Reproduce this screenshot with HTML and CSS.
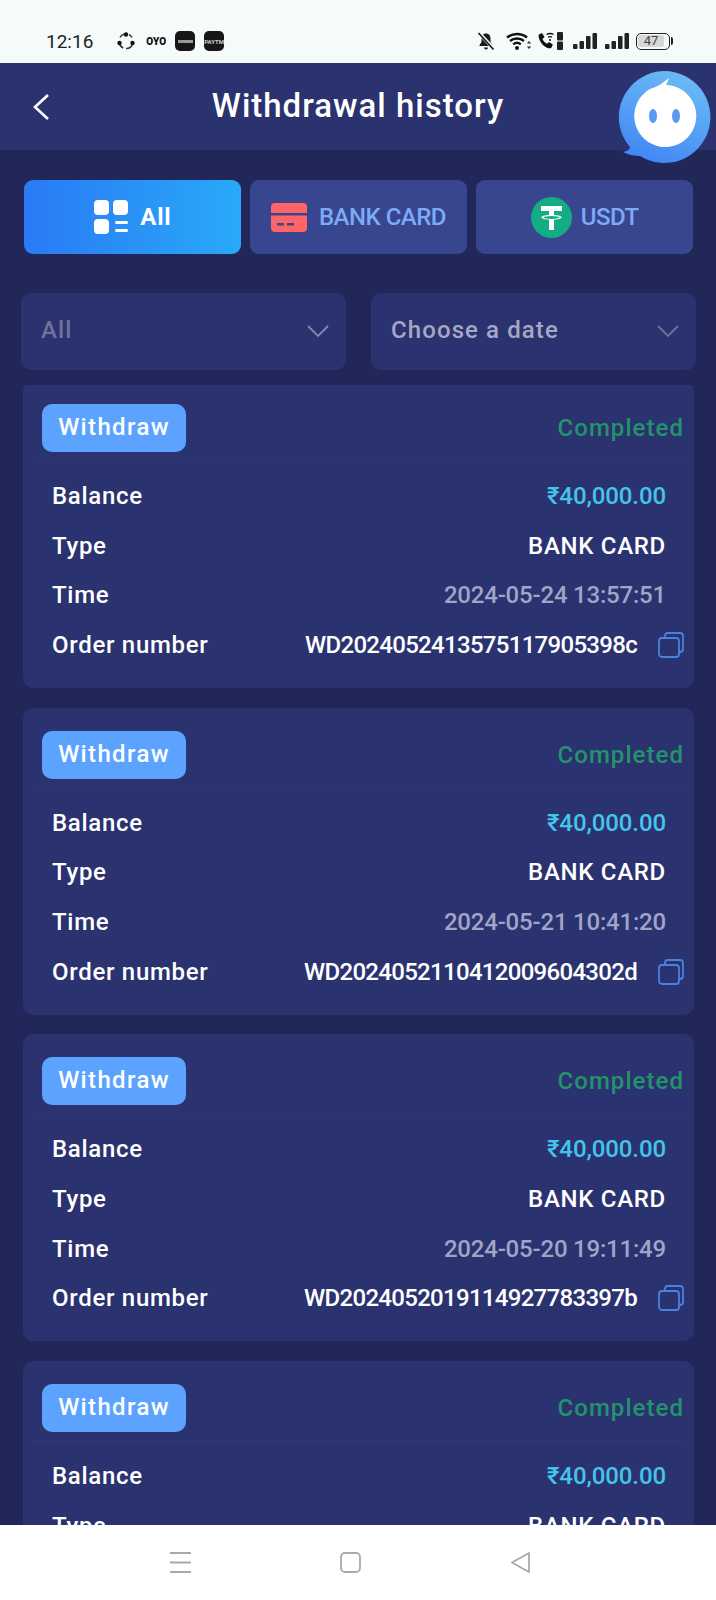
FILE: index.html
```html
<!DOCTYPE html>
<html>
  <head>
    <title>Withdrawal history</title>
    <link rel="stylesheet" href="styles.css">
  </head>
  <body>
    <div class="status-bar">
      <div class="status-left">
        <span class="clock">12:16</span>
        <svg class="app-sync" width="20" height="20" viewBox="0 0 20 20"><path d="M10 3a7 7 0 0 0-6 3.500M16 6.500A7 7 0 0 0 13 3.600M3.200 12a7 7 0 0 0 4 5M10 17.500a7 7 0 0 0 6.800-5" fill="none" stroke="#333" stroke-width="1.500"/><circle cx="10" cy="3.500" r="2.200" fill="#111"/><circle cx="3.500" cy="12" r="2.200" fill="#111"/><circle cx="16.500" cy="12" r="2.200" fill="#111"/></svg>
        <span class="app-oyo">OYO</span>
        <span class="app-tile"><span class="tile-bar"></span></span>
        <span class="app-tile"><span class="tile-word">PAYTM</span></span>
      </div>
      <div class="status-right">
        <svg width="20" height="20" viewBox="0 0 20 20"><path d="M10 2.500c-3 0-4.500 2.300-4.500 5v3.500L3.500 14v1h13v-1l-2-3V7.500c0-2.700-1.500-5-4.500-5z" fill="#1a1a1a"/><path d="M8 16.500h4a2 2 0 0 1-4 0z" fill="#1a1a1a"/><path d="M3 2l15 16" stroke="#f5fafa" stroke-width="3.500"/><path d="M2.500 2l15 16.500" stroke="#1a1a1a" stroke-width="1.700"/></svg>
        <svg class="ic-wifi" width="26" height="20" viewBox="0 0 26 20"><path d="M1 6.500a16 16 0 0 1 20 0M4 10a11 11 0 0 1 14 0M7.200 13.400a6 6 0 0 1 7.600 0" fill="none" stroke="#111" stroke-width="2.400"/><circle cx="11" cy="17" r="2" fill="#111"/><path d="M23 10l2.200 2.500h-4.400zM23 18l-2.200-2.500h4.400z" fill="#333"/></svg>
        <svg class="ic-call" width="28" height="20" viewBox="0 0 28 20"><path d="M2 3.500l3-1.500 2.500 4-2 2c.8 2 2.500 3.800 4.500 4.700l2-1.800 3.800 2.600-1.300 3c-.5.800-1.500 1-2.500.8C6.500 16.200 2.500 11 1.600 5.500c-.1-.8 0-1.600.4-2z" fill="#111"/><path d="M9.500 3.500a7 7 0 0 1 7 0M11 6.200a4 4 0 0 1 4 0" fill="none" stroke="#111" stroke-width="1.300"/><circle cx="13" cy="9" r="1" fill="#111"/><rect x="20" y="1" width="6" height="8.500" rx="1" fill="#222"/><rect x="20" y="10.500" width="6" height="8.500" rx="1" fill="#222"/></svg>
        <svg width="25" height="18" viewBox="0 0 25 18"><rect x="1" y="12" width="4.500" height="5" rx="1" fill="#222"/><rect x="7.500" y="9" width="4.500" height="8" rx="1" fill="#222"/><rect x="14" y="4" width="4.500" height="13" rx="1" fill="#222"/><rect x="20.500" y="1" width="4.500" height="16" rx="1" fill="#222"/></svg>
        <svg width="25" height="18" viewBox="0 0 25 18"><rect x="1" y="12" width="4.500" height="5" rx="1" fill="#222"/><rect x="7.500" y="9" width="4.500" height="8" rx="1" fill="#222"/><rect x="14" y="4" width="4.500" height="13" rx="1" fill="#222"/><rect x="20.500" y="1" width="4.500" height="16" rx="1" fill="#222"/></svg>
        <span class="battery"><span class="battery-level">47</span></span>
      </div>
    </div>

    <div class="top-bar">
      <svg class="back" width="18" height="28" viewBox="0 0 18 28"><path d="M16 2L3 14l13 12" fill="none" stroke="#fff" stroke-width="2.600"/></svg>
      <h1>Withdrawal history</h1>
    </div>

    <div class="chat-bubble">
      <svg width="94" height="94" viewBox="0 0 94 94">
        <defs>
          <linearGradient id="bubbleFill" x1="0.700" y1="0" x2="0.300" y2="1">
            <stop offset="0" stop-color="#6bbcf5"/>
            <stop offset="1" stop-color="#4186f5"/>
          </linearGradient>
        </defs>
        <path d="M47 1a46 46 0 1 1-24 85c-5 0-11-1-17-4 5-1 7-3 7-5A46 46 0 0 1 47 1z" fill="url(#bubbleFill)"/>
        <path d="M52 8c-1 3-2 5-3 7a31 31 0 1 1-16 4c7-2 13-6 19-11z" fill="#fff"/>
        <ellipse cx="36" cy="46" rx="4" ry="7" fill="#5b98f2"/>
        <ellipse cx="59" cy="46" rx="4" ry="7" fill="#5b98f2"/>
      </svg>
    </div>

    <div class="tabs">
      <div class="tab tab-active">
        <svg width="36" height="36" viewBox="0 0 36 36"><rect x="1" y="1" width="15" height="15" rx="4" fill="#fff"/><rect x="20" y="1" width="15" height="15" rx="4" fill="#fff"/><rect x="1" y="20" width="15" height="15" rx="4" fill="#fff"/><rect x="22" y="22" width="13" height="3" rx="1.500" fill="#fff"/><rect x="22" y="30" width="13" height="3" rx="1.500" fill="#fff"/></svg>
        <span>All</span>
      </div>
      <div class="tab">
        <svg width="36" height="29" viewBox="0 0 36 29"><path d="M4 0h28a4 4 0 0 1 4 4v6H0V4a4 4 0 0 1 4-4z" fill="#ff6566"/><path d="M0 12.500h36V25a4 4 0 0 1-4 4H4a4 4 0 0 1-4-4z" fill="#ff6566"/><rect x="6" y="20" width="7" height="2.500" fill="#37468e"/><rect x="16" y="20" width="7" height="2.500" fill="#37468e"/></svg>
        <span>BANK CARD</span>
      </div>
      <div class="tab tab-usdt">
        <svg width="41" height="41" viewBox="0 0 41 41"><circle cx="20.500" cy="20.500" r="20.500" fill="#14ad83"/><path d="M10 9h21v5h-8v4c4 .2 7.500 1 7.500 2.300S27 22.500 23 22.800V33h-5V22.800c-4-.3-7.500-1.100-7.500-2.500S14 18.200 18 18v-4h-8z" fill="#fff"/><ellipse cx="20.500" cy="20.500" rx="8" ry="1.400" fill="#14ad83"/></svg>
        <span>USDT</span>
      </div>
    </div>

    <div class="filters">
      <div class="filter">
        <span class="filter-muted">All</span>
        <svg width="22" height="13" viewBox="0 0 22 13"><path d="M1 1l10 10L21 1" fill="none" stroke="#8488ac" stroke-width="1.800"/></svg>
      </div>
      <div class="filter">
        <span>Choose a date</span>
        <svg width="22" height="13" viewBox="0 0 22 13"><path d="M1 1l10 10L21 1" fill="none" stroke="#6f7396" stroke-width="1.800"/></svg>
      </div>
    </div>

    <div class="list">
      <div class="card">
        <div class="card-head"><span class="badge">Withdraw</span><span class="state">Completed</span></div>
        <div class="row"><span>Balance</span><span class="money">₹40,000.00</span></div>
        <div class="row"><span>Type</span><span>BANK CARD</span></div>
        <div class="row"><span>Time</span><span class="time">2024-05-24 13:57:51</span></div>
        <div class="row row-order"><span>Order number</span><span class="order">WD2024052413575117905398c<svg class="copy" width="26" height="26" viewBox="0 0 26 26"><path d="M7 5V4a3 3 0 0 1 3-3h12a3 3 0 0 1 3 3v13a3 3 0 0 1-3 3h-1" fill="none" stroke="#4b82de" stroke-width="1.800"/><rect x="1" y="6" width="20" height="19" rx="3" fill="none" stroke="#4b82de" stroke-width="1.800"/></svg></span></div>
      </div>
      <div class="card">
        <div class="card-head"><span class="badge">Withdraw</span><span class="state">Completed</span></div>
        <div class="row"><span>Balance</span><span class="money">₹40,000.00</span></div>
        <div class="row"><span>Type</span><span>BANK CARD</span></div>
        <div class="row"><span>Time</span><span class="time">2024-05-21 10:41:20</span></div>
        <div class="row row-order"><span>Order number</span><span class="order">WD2024052110412009604302d<svg class="copy" width="26" height="26" viewBox="0 0 26 26"><path d="M7 5V4a3 3 0 0 1 3-3h12a3 3 0 0 1 3 3v13a3 3 0 0 1-3 3h-1" fill="none" stroke="#4b82de" stroke-width="1.800"/><rect x="1" y="6" width="20" height="19" rx="3" fill="none" stroke="#4b82de" stroke-width="1.800"/></svg></span></div>
      </div>
      <div class="card">
        <div class="card-head"><span class="badge">Withdraw</span><span class="state">Completed</span></div>
        <div class="row"><span>Balance</span><span class="money">₹40,000.00</span></div>
        <div class="row"><span>Type</span><span>BANK CARD</span></div>
        <div class="row"><span>Time</span><span class="time">2024-05-20 19:11:49</span></div>
        <div class="row row-order"><span>Order number</span><span class="order">WD2024052019114927783397b<svg class="copy" width="26" height="26" viewBox="0 0 26 26"><path d="M7 5V4a3 3 0 0 1 3-3h12a3 3 0 0 1 3 3v13a3 3 0 0 1-3 3h-1" fill="none" stroke="#4b82de" stroke-width="1.800"/><rect x="1" y="6" width="20" height="19" rx="3" fill="none" stroke="#4b82de" stroke-width="1.800"/></svg></span></div>
      </div>
      <div class="card">
        <div class="card-head"><span class="badge">Withdraw</span><span class="state">Completed</span></div>
        <div class="row"><span>Balance</span><span class="money">₹40,000.00</span></div>
        <div class="row"><span>Type</span><span>BANK CARD</span></div>
      </div>
    </div>

    <div class="nav-bar">
      <svg width="21" height="21" viewBox="0 0 21 21"><path d="M0 1h21M0 10.500h21M0 20h21" stroke="#a9a9a9" stroke-width="1.800"/></svg>
      <svg width="21" height="21" viewBox="0 0 21 21"><rect x="1" y="1" width="19" height="19" rx="4" fill="none" stroke="#a9a9a9" stroke-width="1.800"/></svg>
      <svg width="21" height="21" viewBox="0 0 21 21"><path d="M19 1v19L2 10.500z" fill="none" stroke="#a9a9a9" stroke-width="1.800" stroke-linejoin="round"/></svg>
    </div>
  </body>
</html>
```

FILE: styles.css
```css
/* Page shell */
body {
  margin: 0;
  width: 716px;
  height: 1600px;
  overflow: hidden;
  position: relative;
  display: flex;
  flex-direction: column;
  background-color: #22275a;
  color: #fff;
  font-family: Roboto, "Liberation Sans", sans-serif;
  font-weight: 500;
  font-size: 24px;
  letter-spacing: 0.7px;
}

/* Phone status bar */
.status-bar {
  height: 63px;
  flex: none;
  box-sizing: border-box;
  padding: 19px 46px 0 46px;
  display: flex;
  justify-content: space-between;
  align-items: center;
  background-color: #f5fafa;
  color: #222;
}

.status-left,
.status-right {
  display: flex;
  align-items: center;
}

.clock {
  font-size: 19px;
  font-weight: 400;
  letter-spacing: 0;
  margin-right: 23px;
}

.app-oyo {
  font-size: 10px;
  font-weight: 900;
  letter-spacing: 0;
  color: #111;
  margin: 0 9px 0 10px;
}

.app-tile {
  width: 20px;
  height: 20px;
  border-radius: 5px;
  margin-right: 9px;
  background-color: #161616;
  display: flex;
  align-items: center;
  justify-content: center;
}

.tile-bar {
  width: 15px;
  height: 3px;
  background-color: #999;
}

.tile-word {
  font-size: 6px;
  font-weight: 700;
  letter-spacing: 0;
  color: #ccc;
}

.status-right svg {
  margin-right: 7px;
}

.status-right .ic-wifi {
  margin-left: 3px;
  margin-right: 5px;
}

.battery {
  width: 34px;
  height: 17px;
  box-sizing: border-box;
  border: 1.500px solid #222;
  border-radius: 5px;
  padding: 1px;
  display: block;
  position: relative;
}

/* battery nub */
.battery::after {
  content: "";
  position: absolute;
  right: -4px;
  top: 3px;
  width: 2px;
  height: 8px;
  border-radius: 0 2px 2px 0;
  background-color: #222;
}

.battery-level {
  display: block;
  width: 26px;
  height: 12px;
  line-height: 12px;
  border-radius: 2px;
  background-color: #d6d8d8;
  text-align: center;
  font-size: 13px;
  font-weight: 400;
  letter-spacing: 0;
  color: #444;
}

/* Title bar */
.top-bar {
  height: 87px;
  flex: none;
  position: relative;
  display: flex;
  align-items: center;
  justify-content: center;
  background-color: #2b3270;
}

.top-bar h1 {
  margin: 0 0 2px;
  font-size: 33px;
  font-weight: 500;
  letter-spacing: 1px;
}

.back {
  position: absolute;
  left: 32px;
  top: 30px;
}

/* Floating support button */
.chat-bubble {
  position: absolute;
  left: 617px;
  top: 70px;
  line-height: 0;
}

/* Category tabs */
.tabs {
  margin: 30px 23px 0 24px;
  display: grid;
  grid-template-columns: repeat(3, 1fr);
  gap: 9.500px;
}

.tab {
  height: 74px;
  border-radius: 9px;
  display: flex;
  align-items: center;
  justify-content: center;
  gap: 12px;
  background-color: #37468e;
  color: #7cabf5;
  font-weight: 500;
  letter-spacing: -0.5px;
}

.tab-active {
  gap: 11px;
  background-image: linear-gradient(90deg, #2a7af5, #29a9f8);
  color: #fff;
  font-weight: 700;
  letter-spacing: 0.7px;
}

.tab-usdt {
  gap: 9px;
}

/* Filter dropdowns */
.filters {
  margin: 39px 20px 0 21px;
  display: grid;
  grid-template-columns: 325px 325px;
  justify-content: space-between;
}

.filter {
  height: 77px;
  box-sizing: border-box;
  padding: 0 17px 3px 20px;
  border-radius: 10px;
  display: flex;
  align-items: center;
  justify-content: space-between;
  background-color: #2b3270;
  color: #a5a8c4;
  letter-spacing: 1.100px;
}

.filter svg {
  margin-top: 3px;
}

.filter-muted {
  color: #6f7399;
}

/* Withdrawal records */
.list {
  flex: 1;
  min-height: 0;
  margin: 15px 22px 0 23px;
  overflow: hidden;
}

.card {
  height: 307px;
  box-sizing: border-box;
  margin-bottom: 19.700px;
  padding-top: 23px;
  border-radius: 10px;
  background-color: #2b3270;
}

/* first card sits slightly scrolled under the filters */
.card:first-child {
  margin-top: -4px;
}

.card-head {
  height: 57px;
  box-sizing: border-box;
  margin: 0 10px 10px 9px;
  padding: 0 0 8px 10px;
  display: flex;
  justify-content: space-between;
  align-items: center;
  border-bottom: 1px solid #2f3776;
}

.badge {
  width: 144px;
  height: 48px;
  border-radius: 10px;
  background-color: #5ca3ff;
  text-align: center;
  line-height: 46px;
  letter-spacing: 1.350px;
}

.state {
  color: #23936b;
  letter-spacing: 1.050px;
}

.row {
  height: 49.700px;
  margin-left: 29px;
  margin-right: 28px;
  display: flex;
  justify-content: space-between;
  align-items: center;
}

.row-order {
  margin-right: 10px;
}

.money {
  color: #45c4ea;
  letter-spacing: -0.1px;
}

.time {
  color: #a0a5c8;
  letter-spacing: -0.2px;
}

.order {
  display: flex;
  align-items: center;
  letter-spacing: -0.7px;
}

.copy {
  margin-left: 21px;
}

/* Phone navigation bar */
.nav-bar {
  height: 75px;
  flex: none;
  box-sizing: border-box;
  padding: 0 185px 0 170px;
  display: flex;
  justify-content: space-between;
  align-items: center;
  background-color: #fff;
}
```
